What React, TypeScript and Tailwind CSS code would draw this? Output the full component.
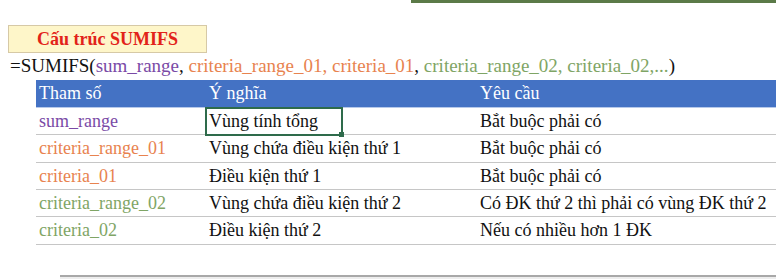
const ROWS = [
  { name: "sum_range", color: "text-[#7a4aa6]", mean: "Vùng tính tổng", req: "Bắt buộc phải có", h: "h-[27px]" },
  { name: "criteria_range_01", color: "text-[#e8834f]", mean: "Vùng chứa điều kiện thứ 1", req: "Bắt buộc phải có", h: "h-[28px]" },
  { name: "criteria_01", color: "text-[#e8834f]", mean: "Điều kiện thứ 1", req: "Bắt buộc phải có", h: "h-[27px]" },
  { name: "criteria_range_02", color: "text-[#7fa565]", mean: "Vùng chứa điều kiện thứ 2", req: "Có ĐK thứ 2 thì phải có vùng ĐK thứ 2", h: "h-[27px]" },
  { name: "criteria_02", color: "text-[#7fa565]", mean: "Điều kiện thứ 2", req: "Nếu có nhiều hơn 1 ĐK", h: "h-[28px]" },
];

export default function App() {
  return (
    <div className="h-[279px] w-[776px] overflow-hidden bg-white font-['Liberation_Serif',serif] text-[18px] text-[#111]">
      {/* edge of the box above, cut off by the frame */}
      <div className="ml-[411px] h-[3px] border-b-[3px] border-l-2 border-[#5b7a48]" />

      <div className="ml-[8px] mt-[22px] flex h-[28px] w-[199px] items-center justify-center border border-[#d6c9a6] bg-[#fef6c9] font-bold text-[#e2231a]">
        Cấu trúc SUMIFS
      </div>

      <div className="ml-[10px] flex h-[27px] items-center whitespace-nowrap text-[19px]">
        <span>=SUMIFS(</span>
        <span className="text-[#7a4aa6]">sum_range</span>
        <span>,&nbsp;</span>
        <span className="text-[#e8834f]">criteria_range_01, criteria_01</span>
        <span>,&nbsp;</span>
        <span className="text-[#7fa565]">criteria_range_02, criteria_02,...</span>
        <span>)</span>
      </div>

      <div className="ml-[36px]">
        <div className="flex h-[28px] items-center border-b border-[#b7c9ea] bg-[#4472c4] text-white">
          <div className="w-[169px] pl-[3px]">Tham số</div>
          <div className="w-[271px] pl-[4px]">Ý nghĩa</div>
          <div className="pl-[4px]">Yêu cầu</div>
        </div>
        {ROWS.map((r, i) => (
          <div key={r.name} className={`flex items-center border-b border-[#c6c6c6] whitespace-nowrap ${r.h}`}>
            <div className={`w-[169px] pl-[3px] ${r.color}`}>{r.name}</div>
            <div className="relative flex h-full w-[271px] items-center pl-[4px]">
              {r.mean}
              {i === 0 && (
                <div className="absolute -top-[1px] left-0 h-[29px] w-[138px] border-2 border-[#2e6b4b]">
                  <div className="absolute -bottom-[3px] -right-[3px] h-[5px] w-[5px] bg-[#2e6b4b]" />
                </div>
              )}
            </div>
            <div className="pl-[4px]">{r.req}</div>
          </div>
        ))}
      </div>

      <div className="ml-[60px] mt-[30px] h-[10px] border-t-2 border-[#a8a8a8] bg-[#ededed]" />
    </div>
  );
}
